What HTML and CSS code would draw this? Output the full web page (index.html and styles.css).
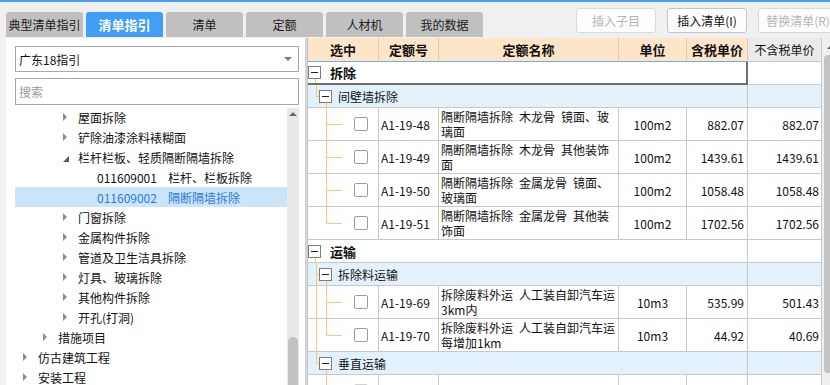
FILE: index.html
```html
<!DOCTYPE html>
<html lang="zh-CN">
<head>
    <meta charset="UTF-8">
    <title>清单指引</title>
    <link rel="stylesheet" href="styles.css">
</head>
<body>
    <div class="topbar">
        <div class="tabs">
            <div class="tab">典型清单指引</div>
            <div class="tab active">清单指引</div>
            <div class="tab">清单</div>
            <div class="tab">定额</div>
            <div class="tab">人材机</div>
            <div class="tab">我的数据</div>
        </div>
        <div class="actions">
            <button class="btn" disabled>插入子目</button>
            <button class="btn">插入清单(I)</button>
            <button class="btn" disabled>替换清单(R)</button>
        </div>
    </div>

    <div class="main">
        <!-- 左侧：清单指引树 -->
        <div class="left-panel">
            <div class="select">广东18指引<span class="caret"></span></div>
            <input class="search" type="text" placeholder="搜索">
            <div class="tree-wrap">
                <ul class="tree">
                    <li class="lv3"><span class="arrow"></span>屋面拆除</li>
                    <li class="lv3"><span class="arrow"></span>铲除油漆涂料裱糊面</li>
                    <li class="lv3"><span class="arrow open"></span>栏杆栏板、轻质隔断隔墙拆除</li>
                    <li class="leaf"><span class="code">011609001</span>栏杆、栏板拆除</li>
                    <li class="leaf selected"><span class="code">011609002</span>隔断隔墙拆除</li>
                    <li class="lv3"><span class="arrow"></span>门窗拆除</li>
                    <li class="lv3"><span class="arrow"></span>金属构件拆除</li>
                    <li class="lv3"><span class="arrow"></span>管道及卫生洁具拆除</li>
                    <li class="lv3"><span class="arrow"></span>灯具、玻璃拆除</li>
                    <li class="lv3"><span class="arrow"></span>其他构件拆除</li>
                    <li class="lv3"><span class="arrow"></span>开孔(打洞)</li>
                    <li class="lv2"><span class="arrow"></span>措施项目</li>
                    <li class="lv1"><span class="arrow"></span>仿古建筑工程</li>
                    <li class="lv1"><span class="arrow"></span>安装工程</li>
                </ul>
                <div class="scroll-s">
                    <span class="up"></span>
                    <span class="thumb"></span>
                </div>
            </div>
        </div>

        <!-- 右侧：定额表格 -->
        <div class="right-panel">
            <div class="grid">
                <div class="row head">
                    <div class="c">选中</div>
                    <div class="c">定额号</div>
                    <div class="c">定额名称</div>
                    <div class="c">单位</div>
                    <div class="c">含税单价</div>
                    <div class="c plain">不含税单价</div>
                </div>

                <div class="row grp top focus">
                    <div class="c span"><span class="node"><i class="box"></i></span><span class="label">拆除</span></div>
                    <div class="c"></div>
                </div>
                <div class="row grp sub">
                    <div class="c span"><i class="gd end stub"></i><span class="node"><i class="box"></i></span><span class="label">间壁墙拆除</span></div>
                    <div class="c"></div>
                </div>
                <div class="row item">
                    <div class="c sel"><i class="gd"></i><i class="gd in tee"></i><span class="cb"></span></div>
                    <div class="c code">A1-19-48</div>
                    <div class="c desc">隔断隔墙拆除 木龙骨 镜面、玻璃面</div>
                    <div class="c unit">100m2</div>
                    <div class="c num">882.07</div>
                    <div class="c num">882.07</div>
                </div>
                <div class="row item">
                    <div class="c sel"><i class="gd"></i><i class="gd in tee"></i><span class="cb"></span></div>
                    <div class="c code">A1-19-49</div>
                    <div class="c desc">隔断隔墙拆除 木龙骨 其他装饰面</div>
                    <div class="c unit">100m2</div>
                    <div class="c num">1439.61</div>
                    <div class="c num">1439.61</div>
                </div>
                <div class="row item">
                    <div class="c sel"><i class="gd"></i><i class="gd in tee"></i><span class="cb"></span></div>
                    <div class="c code">A1-19-50</div>
                    <div class="c desc">隔断隔墙拆除 金属龙骨 镜面、玻璃面</div>
                    <div class="c unit">100m2</div>
                    <div class="c num">1058.48</div>
                    <div class="c num">1058.48</div>
                </div>
                <div class="row item">
                    <div class="c sel"><i class="gd"></i><i class="gd in end"></i><span class="cb"></span></div>
                    <div class="c code">A1-19-51</div>
                    <div class="c desc">隔断隔墙拆除 金属龙骨 其他装饰面</div>
                    <div class="c unit">100m2</div>
                    <div class="c num">1702.56</div>
                    <div class="c num">1702.56</div>
                </div>

                <div class="row grp top">
                    <div class="c span"><span class="node"><i class="box"></i></span><span class="label">运输</span></div>
                    <div class="c"></div>
                </div>
                <div class="row grp sub">
                    <div class="c span"><i class="gd tee stub"></i><span class="node"><i class="box"></i></span><span class="label">拆除料运输</span></div>
                    <div class="c"></div>
                </div>
                <div class="row item">
                    <div class="c sel"><i class="gd pass"></i><i class="gd in tee"></i><span class="cb"></span></div>
                    <div class="c code">A1-19-69</div>
                    <div class="c desc">拆除废料外运 人工装自卸汽车运3km内</div>
                    <div class="c unit">10m3</div>
                    <div class="c num">535.99</div>
                    <div class="c num">501.43</div>
                </div>
                <div class="row item">
                    <div class="c sel"><i class="gd pass"></i><i class="gd in end"></i><span class="cb"></span></div>
                    <div class="c code">A1-19-70</div>
                    <div class="c desc">拆除废料外运 人工装自卸汽车运每增加1km</div>
                    <div class="c unit">10m3</div>
                    <div class="c num">44.92</div>
                    <div class="c num">40.69</div>
                </div>
                <div class="row grp sub">
                    <div class="c span"><i class="gd end stub"></i><span class="node"><i class="box"></i></span><span class="label">垂直运输</span></div>
                    <div class="c"></div>
                </div>
                <div class="row item">
                    <div class="c sel"><i class="gd"></i><i class="gd in tee"></i><span class="cb off"></span></div>
                    <div class="c code"></div>
                    <div class="c desc"></div>
                    <div class="c unit"></div>
                    <div class="c num"></div>
                    <div class="c num"></div>
                </div>
            </div>
            <div class="scroll-b">
                <span class="up"></span>
                <span class="thumb"></span>
            </div>
        </div>
    </div>
</body>
</html>
```

FILE: styles.css
```css
* {
    margin: 0;
    padding: 0;
    box-sizing: border-box;
}
body {
    width: 830px;
    height: 385px;
    overflow: hidden;
    background-color: #f0f0f0;
    color: #111;
    font-family: "Noto Sans CJK SC", sans-serif;
    font-size: 12px;
}

/* 顶部标签与按钮 */
.topbar {
    height: 38px;
    border-top: 2px solid #4a9ff5;
    display: flex;
    padding-left: 6px;
    overflow: hidden;
}
.tabs {
    display: flex;
    gap: 3px;
    align-self: flex-end;
    margin-bottom: 1px;
}
.tab {
    width: 77px;
    height: 25px;
    line-height: 25px;
    background-color: #c0c0c0;
    border-radius: 3px 3px 0 0;
    text-align: center;
    color: #1a1a1a;
}
.tab.active {
    background-color: #409ef6;
    color: #fff;
    font-weight: bold;
    font-size: 13px;
}
.actions {
    display: flex;
    gap: 11px;
    margin-left: 93px;
    margin-top: 6px;
}
.btn {
    flex: none;
    width: 80px;
    height: 25px;
    border: 1px solid #c4c4c4;
    border-radius: 3px;
    background-color: #fdfdfd;
    font-family: "Noto Sans CJK SC", sans-serif;
    font-size: 12px;
    color: #111;
}
.btn:disabled {
    color: #b5b5b5;
    border-color: #d8d8d8;
}

.main {
    display: flex;
    height: 347px;
    overflow: hidden;
}

/* 左侧面板 */
.left-panel {
    flex: none;
    width: 299px;
    margin-left: 6px;
    background-color: #fff;
    padding: 8px 6px 0 9px;
    display: flex;
    flex-direction: column;
}
.select {
    height: 26px;
    border: 1px solid #a8a8a8;
    padding: 0 6px 0 3px;
    display: flex;
    align-items: center;
    justify-content: space-between;
}
.caret {
    border-left: 4px solid transparent;
    border-right: 4px solid transparent;
    border-top: 4px solid #7a7a7a;
}
.search {
    margin-top: 6px;
    height: 27px;
    width: 100%;
    border: 1px solid #a8a8a8;
    padding-left: 3px;
    font-family: "Noto Sans CJK SC", sans-serif;
    font-size: 12px;
    outline: none;
}
.search::placeholder {
    color: #9a9a9a;
}
.tree-wrap {
    flex: 1;
    min-height: 0;
    display: flex;
    margin-top: 2px;
    overflow: hidden;
}
.tree {
    flex: 1;
    list-style-type: none;
}
.tree li {
    height: 20px;
    display: flex;
    align-items: center;
    white-space: nowrap;
}
.tree li.selected {
    background-color: #cce4f7;
    color: #2a7bdf;
}
.lv1 { padding-left: 8px; }
.lv2 { padding-left: 28px; }
.lv3 { padding-left: 48px; }
.leaf { padding-left: 82px; }
.arrow {
    width: 0;
    border-left: 4px solid #8c8c8c;
    border-top: 4px solid transparent;
    border-bottom: 4px solid transparent;
    margin-right: 11px;
}
.arrow.open {
    border-top: none;
    border-left: 6px solid transparent;
    border-bottom: 6px solid #595959;
    margin-right: 9px;
    margin-top: 4px;
}
.leaf .code {
    margin-right: 11px;
}
.scroll-s {
    flex: none;
    width: 12px;
    margin-top: 1px;
    background-color: #e9e9e9;
    display: flex;
    flex-direction: column;
    align-items: center;
    justify-content: space-between;
}
.scroll-s .up {
    margin-top: 4px;
    border-left: 4px solid transparent;
    border-right: 4px solid transparent;
    border-bottom: 4px solid #6a6a6a;
}
.scroll-s .thumb {
    width: 10px;
    height: 48px;
    border-radius: 5px 5px 0 0;
    background-color: #c1c1c1;
}

/* 右侧表格 */
.right-panel {
    flex: none;
    display: flex;
    border-left: 2px solid #d4d4d4;
}
.grid {
    width: 515px;
    border-left: 1px solid #c6c6c6;
    background-color: #fff;
}
.row {
    display: grid;
    grid-template-columns: 71px 60px 180px 68px 61px 74px;
}
.c {
    border-right: 1px solid #c8c8c8;
    border-bottom: 1px solid #c8c8c8;
    overflow: hidden;
}
.row.head {
    height: 24px;
    background-color: #fee5c7;
}
.head .c {
    border-right-color: #dcc9b0;
    border-bottom-color: #6aaef0;
    font-weight: bold;
    font-size: 13px;
    line-height: 23px;
    text-align: center;
}
.head .c.plain {
    background-color: #ebebeb;
    border-bottom-color: #c8c8c8;
    font-weight: normal;
    font-size: 12px;
}

.row.grp {
    height: 23px;
}
.row.sub {
    background-color: #e3f1fd;
}
.grp .span {
    grid-column: span 5;
    display: flex;
    align-items: stretch;
}
.grp.sub .span {
    padding-left: 8px;
}
.grp.focus .span {
    border-right: 2px solid #6e6e6e;
    border-bottom: 2px solid #6e6e6e;
}
.node {
    flex: none;
    width: 13px;
    display: flex;
    align-items: center;
    background: linear-gradient(#fdc776, #fdc776) 7px 100% / 1px 50% no-repeat;
}
.box {
    width: 13px;
    height: 13px;
    border: 1px solid #7c7c7c;
    background-color: #fff;
    display: flex;
    align-items: center;
    justify-content: center;
}
.box::after {
    content: "";
    width: 7px;
    height: 1px;
    background-color: #222;
}
.grp .label {
    align-self: center;
    margin-left: 6px;
}
.grp.top .label {
    margin-left: 9px;
    font-weight: bold;
    font-size: 13px;
}

/* 树形连接线 */
.gd {
    flex: none;
    width: 10px;
    background-repeat: no-repeat;
}
.gd.in {
    width: 16px;
    margin-right: 12px;
}
.gd.stub {
    width: 3px;
}
.gd.pass {
    background-image: linear-gradient(#fdc776, #fdc776);
    background-size: 1px 100%;
}
.gd.tee {
    background-image: linear-gradient(#fdc776, #fdc776), linear-gradient(#fdc776, #fdc776);
    background-size: 1px 100%, 100% 1px;
    background-position: 0 0, 0 50%;
}
.gd.end {
    background-image: linear-gradient(#fdc776, #fdc776), linear-gradient(#fdc776, #fdc776);
    background-size: 1px 50%, 100% 1px;
    background-position: 0 0, 0 50%;
}

.row.item {
    height: 33px;
}
.item .sel {
    display: flex;
    align-items: stretch;
    padding-left: 8px;
}
.cb {
    flex: none;
    align-self: center;
    width: 14px;
    height: 14px;
    border: 1px solid #9c9c9c;
    border-radius: 2px;
    background-color: #fff;
}
.cb.off {
    background-color: #f2f2f2;
    border-color: #d2d2d2;
}
.item .code {
    display: flex;
    align-items: center;
    padding-left: 2px;
}
.item .desc {
    padding: 1px 0 0 2px;
    line-height: 15px;
    word-spacing: 3.3px;
}
.item .unit {
    display: flex;
    align-items: center;
    justify-content: center;
}
.item .num {
    display: flex;
    align-items: center;
    justify-content: flex-end;
    padding-right: 3px;
}
.item .num:last-child {
    padding-right: 2px;
}

.scroll-b {
    flex: none;
    width: 17px;
    background-color: #efefef;
    padding: 0 2px;
    display: flex;
    flex-direction: column;
    align-items: center;
}
.scroll-b .up {
    height: 17px;
    display: flex;
    align-items: center;
}
.scroll-b .up::after {
    content: "";
    border-left: 4px solid transparent;
    border-right: 4px solid transparent;
    border-bottom: 4px solid #606060;
}
.scroll-b .thumb {
    width: 13px;
    height: 318px;
    border-radius: 4px;
    background-color: #c3c3c3;
}
```
